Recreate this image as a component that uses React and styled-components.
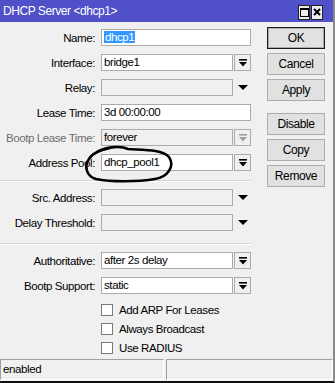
import React from 'react';
import styled, { createGlobalStyle } from 'styled-components';

const font = `"Liberation Sans", Arial, sans-serif`;

const Global = createGlobalStyle`
  html, body { margin: 0; padding: 0; background: #f0f0f0; }
  body { font-family: ${font}; }
  * { box-sizing: border-box; }
`;

const Window = styled.div`
  width: 335px;
  height: 383px;
  display: flex;
  flex-direction: column;
  background: #f0f0f0;
  border-right: 2px solid #8a8a8a;
  border-bottom: 2px solid #111;
  overflow: hidden;
  color: #000;
  font-size: 11.5px;
  letter-spacing: -0.4px;
`;

const TitleBar = styled.div`
  height: 22px;
  flex: none;
  background: #5050c8;
  color: #fff;
  display: flex;
  align-items: center;
  padding: 0 10px 0 3px;
  font-size: 12px;
  letter-spacing: -0.45px;
`;

const TitleText = styled.span`
  flex: 1;
  line-height: 22px;
`;

const TitleButtons = styled.div`
  display: flex;
  gap: 1px;
  margin-top: 2px;
`;

const TitleBtn = styled.span`
  width: 12px;
  height: 15px;
  border: 1px solid #222;
  background: #ececec;
  display: flex;
  align-items: center;
  justify-content: center;
`;

const Body = styled.div`
  flex: 1;
  display: flex;
  min-height: 0;
`;

const Form = styled.div`
  position: relative;
  width: 251px;
  padding-top: 7px;
  display: flex;
  flex-direction: column;
  gap: 8px;
`;

const Row = styled.div`
  display: grid;
  grid-template-columns: 95px 150px;
  column-gap: 6px;
  height: 17px;
  align-items: center;
`;

const Label = styled.span`
  text-align: right;
  white-space: nowrap;
  color: ${p => (p.$disabled ? '#6d6d6d' : '#000')};
`;

const Field = styled.div`
  display: flex;
  gap: 1px;
  height: 17px;
`;

const Input = styled.div`
  flex: 1;
  height: 17px;
  border: 1px solid #ababab;
  background: ${p => (p.$empty || p.$disabled ? '#f0f0f0' : '#fff')};
  line-height: 15px;
  padding-left: 2px;
  white-space: nowrap;
  overflow: hidden;
`;

const Selected = styled.span`
  background: #3399ff;
  color: #fff;
  padding: 0 1px;
`;

const DropBtn = styled.div`
  width: 17px;
  height: 17px;
  flex: none;
  border: 1px solid #ababab;
  background: #f0f0f0;
  display: flex;
  align-items: center;
  justify-content: center;
`;

const ArrowOnly = styled.div`
  width: 17px;
  height: 17px;
  flex: none;
  display: flex;
  align-items: center;
  justify-content: center;
`;

const Separator = styled.div`
  height: 2px;
  width: 251px;
  border-top: 1px solid #d5d5d5;
  border-bottom: 1px solid #ffffff;
  margin-top: ${p => p.$top}px;
  margin-bottom: -1px;
`;

const Checks = styled.div`
  display: flex;
  flex-direction: column;
  gap: 6px;
  margin-top: 1px;
  padding-left: 101px;
`;

const CheckRow = styled.label`
  display: flex;
  align-items: center;
  gap: 6px;
  height: 13px;
  white-space: nowrap;
`;

const Box = styled.span`
  width: 12px;
  height: 12px;
  border: 1px solid #7a7a7a;
  background: #fff;
  flex: none;
`;

const Buttons = styled.div`
  margin-left: 16px;
  padding-top: 5px;
  display: flex;
  flex-direction: column;
  gap: 4px;
`;

const Button = styled.div`
  width: 58px;
  height: 22px;
  border: 1px solid ${p => (p.$default ? '#1a1a1a' : '#adadad')};
  box-shadow: ${p => (p.$default ? 'inset 0 0 0 1px #adadad' : 'none')};
  background: #e1e1e1;
  font-size: 12px;
  display: flex;
  align-items: center;
  justify-content: center;
  margin-top: ${p => p.$gapTop || 0}px;
`;

const StatusBar = styled.div`
  flex: none;
  height: 23px;
  display: flex;
  gap: 2px;
  padding-top: 1px;
  padding-bottom: 1px;
`;

const Panel = styled.div`
  width: ${p => (p.$w ? `${p.$w}px` : 'auto')};
  flex: ${p => (p.$w ? 'none' : '1')};
  border-top: 1px solid #a0a0a0;
  border-left: 1px solid #a0a0a0;
  border-bottom: 1px solid #fff;
  border-right: 1px solid #fff;
  line-height: 19px;
  padding-left: 2px;
`;

const Scribble = styled.svg`
  position: absolute;
  left: 0;
  top: 0;
  pointer-events: none;
`;

const DropIcon = ({ disabled }) => {
  const c = disabled ? '#a0a0a0' : '#000';
  return (
    <svg width="8" height="8" viewBox="0 0 8 8">
      <rect x="0" y="0" width="8" height="1.6" fill={c} />
      <path d="M0 3 H8 L4 7.5 Z" fill={c} />
    </svg>
  );
};

const Arrow = () => (
  <svg width="10" height="5" viewBox="0 0 10 5">
    <path d="M0 0 H10 L5 5 Z" fill="#000" />
  </svg>
);

const FormRow = ({ label, value, drop, arrow, empty, disabled, selected }) => (
  <Row>
    <Label $disabled={disabled}>{label}</Label>
    <Field>
      <Input $empty={empty} $disabled={disabled}>
        {selected ? <Selected>{value}</Selected> : value}
      </Input>
      {drop && (
        <DropBtn>
          <DropIcon disabled={disabled} />
        </DropBtn>
      )}
      {arrow && (
        <ArrowOnly>
          <Arrow />
        </ArrowOnly>
      )}
    </Field>
  </Row>
);

export default function App() {
  return (
    <>
      <Global />
      <Window>
        <TitleBar>
          <TitleText>DHCP Server &lt;dhcp1&gt;</TitleText>
          <TitleButtons>
            <TitleBtn>
              <svg width="9" height="9" viewBox="0 0 9 9">
                <rect x="0.5" y="0.5" width="8" height="8" fill="none" stroke="#000" />
                <rect x="0" y="0" width="9" height="2" fill="#000" />
              </svg>
            </TitleBtn>
            <TitleBtn>
              <svg width="8" height="8" viewBox="0 0 8 8">
                <path d="M1 1 L7 7 M7 1 L1 7" stroke="#000" strokeWidth="2" />
              </svg>
            </TitleBtn>
          </TitleButtons>
        </TitleBar>
        <Body>
          <Form>
            <FormRow label="Name:" value="dhcp1" selected />
            <FormRow label="Interface:" value="bridge1" drop />
            <FormRow label="Relay:" value="" empty arrow />
            <FormRow label="Lease Time:" value="3d 00:00:00" />
            <FormRow label="Bootp Lease Time:" value="forever" disabled drop />
            <FormRow label="Address Pool:" value="dhcp_pool1" drop />
            <Separator $top={1} />
            <FormRow label="Src. Address:" value="" empty arrow />
            <FormRow label="Delay Threshold:" value="" empty arrow />
            <Separator $top={4} />
            <FormRow label="Authoritative:" value="after 2s delay" drop />
            <FormRow label="Bootp Support:" value="static" drop />
            <Checks>
              <CheckRow><Box />Add ARP For Leases</CheckRow>
              <CheckRow><Box />Always Broadcast</CheckRow>
              <CheckRow><Box />Use RADIUS</CheckRow>
            </Checks>
            <Scribble width="251" height="330" viewBox="0 0 251 330">
              <path
                d="M97 130 C108 124 122 124 128 127 C142 128 162 127 169 135 C175 144 168 155 155 157 C138 160 110 160 96 157 C86 154 84 144 89 137 C92 131 100 128 110 126"
                fill="none"
                stroke="#000"
                strokeWidth="2.6"
                strokeLinecap="round"
              />
            </Scribble>
          </Form>
          <Buttons>
            <Button $default>OK</Button>
            <Button>Cancel</Button>
            <Button>Apply</Button>
            <Button $gapTop={8}>Disable</Button>
            <Button>Copy</Button>
            <Button>Remove</Button>
          </Buttons>
        </Body>
        <StatusBar>
          <Panel $w={164}>enabled</Panel>
          <Panel />
        </StatusBar>
      </Window>
    </>
  );
}
